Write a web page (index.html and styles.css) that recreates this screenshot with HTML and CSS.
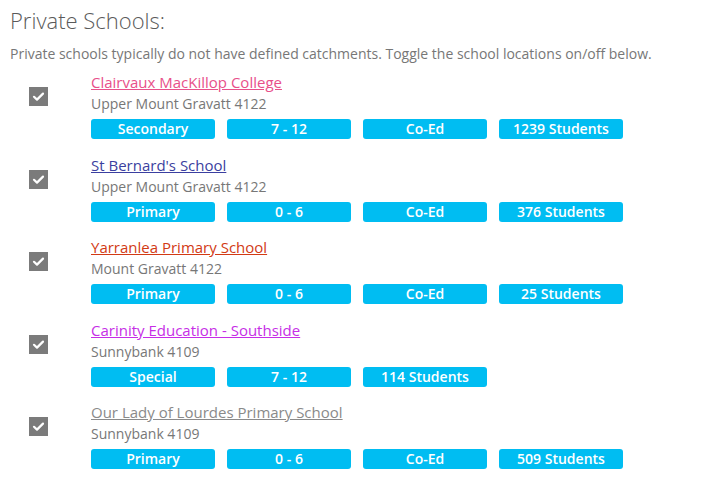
FILE: index.html
```html
<!DOCTYPE html>
<html>
<head>
<meta charset="utf-8">
<link rel="stylesheet" href="styles.css">
</head>
<body>
<div class="page">
  <h2 class="title">Private Schools:</h2>
  <p class="intro">Private schools typically do not have defined catchments. Toggle the school locations on/off below.</p>
  <div class="list">
    <div class="school">
      <div class="check"><svg viewBox="0 0 19 19" width="19" height="19"><rect width="19" height="19" fill="#7b7b7b"/><path d="M5 9.8 L8 12.6 L14 6.6" fill="none" stroke="#fff" stroke-width="2.2" stroke-linecap="round" stroke-linejoin="round"/></svg></div>
      <div class="info">
        <a class="name pink" href="#">Clairvaux MacKillop College</a>
        <div class="addr">Upper Mount Gravatt 4122</div>
        <div class="tags"><span class="tag">Secondary</span><span class="tag">7 - 12</span><span class="tag">Co-Ed</span><span class="tag">1239 Students</span></div>
      </div>
    </div>
    <div class="school">
      <div class="check"><svg viewBox="0 0 19 19" width="19" height="19"><rect width="19" height="19" fill="#7b7b7b"/><path d="M5 9.8 L8 12.6 L14 6.6" fill="none" stroke="#fff" stroke-width="2.2" stroke-linecap="round" stroke-linejoin="round"/></svg></div>
      <div class="info">
        <a class="name blue" href="#">St Bernard's School</a>
        <div class="addr">Upper Mount Gravatt 4122</div>
        <div class="tags"><span class="tag">Primary</span><span class="tag">0 - 6</span><span class="tag">Co-Ed</span><span class="tag">376 Students</span></div>
      </div>
    </div>
    <div class="school">
      <div class="check"><svg viewBox="0 0 19 19" width="19" height="19"><rect width="19" height="19" fill="#7b7b7b"/><path d="M5 9.8 L8 12.6 L14 6.6" fill="none" stroke="#fff" stroke-width="2.2" stroke-linecap="round" stroke-linejoin="round"/></svg></div>
      <div class="info">
        <a class="name red" href="#">Yarranlea Primary School</a>
        <div class="addr">Mount Gravatt 4122</div>
        <div class="tags"><span class="tag">Primary</span><span class="tag">0 - 6</span><span class="tag">Co-Ed</span><span class="tag">25 Students</span></div>
      </div>
    </div>
    <div class="school">
      <div class="check"><svg viewBox="0 0 19 19" width="19" height="19"><rect width="19" height="19" fill="#7b7b7b"/><path d="M5 9.8 L8 12.6 L14 6.6" fill="none" stroke="#fff" stroke-width="2.2" stroke-linecap="round" stroke-linejoin="round"/></svg></div>
      <div class="info">
        <a class="name magenta" href="#">Carinity Education - Southside</a>
        <div class="addr">Sunnybank 4109</div>
        <div class="tags"><span class="tag">Special</span><span class="tag">7 - 12</span><span class="tag">114 Students</span></div>
      </div>
    </div>
    <div class="school">
      <div class="check"><svg viewBox="0 0 19 19" width="19" height="19"><rect width="19" height="19" fill="#7b7b7b"/><path d="M5 9.8 L8 12.6 L14 6.6" fill="none" stroke="#fff" stroke-width="2.2" stroke-linecap="round" stroke-linejoin="round"/></svg></div>
      <div class="info">
        <a class="name grey" href="#">Our Lady of Lourdes Primary School</a>
        <div class="addr">Sunnybank 4109</div>
        <div class="tags"><span class="tag">Primary</span><span class="tag">0 - 6</span><span class="tag">Co-Ed</span><span class="tag">509 Students</span></div>
      </div>
    </div>
  </div>
</div>
</body>
</html>
```
FILE: styles.css
```css
html, body {
  margin: 0;
  padding: 0;
  background: #fff;
}
body {
  font-family: "Open Sans", "Liberation Sans", sans-serif;
  color: #666;
}
.page {
  padding: 5px 10px 0 10px;
}
.title {
  margin: 0;
  font-size: 22px;
  font-weight: 300;
  line-height: 30px;
  color: #5a5a5a;
}
.intro {
  margin: 9px 0 0 0;
  font-size: 14px;
  line-height: 20px;
  color: #777;
}
.list {
  margin-top: 8px;
  display: flex;
  flex-direction: column;
  gap: 15.5px;
}
.school {
  display: flex;
  align-items: flex-start;
}
.check {
  width: 81px;
  padding-left: 19px;
  box-sizing: border-box;
  padding-top: 15px;
  flex: none;
}
.check svg {
  display: block;
}
.info {
  display: flex;
  flex-direction: column;
}
.name {
  font-size: 15px;
  line-height: 21px;
  text-decoration: underline;
  align-self: flex-start;
}
.pink { color: #e8508a; }
.blue { color: #3b3fa0; }
.red { color: #d23a14; }
.magenta { color: #c62ee6; }
.grey { color: #8a8a8a; }
.addr {
  font-size: 14px;
  line-height: 21px;
  color: #777;
}
.tags {
  display: flex;
  gap: 12px;
  margin-top: 5px;
}
.tag {
  width: 124px;
  height: 20px;
  line-height: 20px;
  background: #00bdf2;
  color: #fff;
  font-weight: 600;
  font-size: 14px;
  text-align: center;
  border-radius: 3px;
}
```
